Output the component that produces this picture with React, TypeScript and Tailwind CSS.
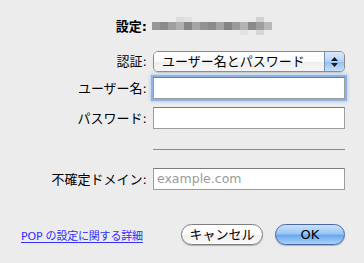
import React from "react";

const jp = "font-['DejaVu_Sans','Noto_Sans_CJK_JP',sans-serif]";

// redacted account name, drawn as a grey mosaic
const mosaicMid = [
  "#979797", "#8a8a8a", "#a0a0a0", "#b0b0b0", "#868686", "#a5a5a5", "#939393", "#8b8b8b",
  "#a2a2a2", "#838383", "#999999", "#b3b3b3", "#8b8b8b", "#9e9e9e", "#b8b8b8",
];
const mosaicTop = [
  "#ececec", "#ececec", "#ececec", "#dcdcdc", "#e0e0e0", "#ececec", "#ececec", "#ececec",
  "#ececec", "#ececec", "#ececec", "#ececec", "#ececec", "#d2d2d2", "#ececec",
];
const mosaicBot = [
  "#ececec", "#ececec", "#ececec", "#ececec", "#ececec", "#ececec", "#ececec", "#ececec",
  "#ececec", "#ececec", "#ececec", "#e2e2e2", "#ececec", "#d6d6d6", "#ececec",
];

function Label({ text, bold }: { text: string; bold?: boolean }) {
  return (
    <div
      className={`w-[147px] shrink-0 text-right text-[13px] leading-none text-black ${
        bold ? "font-bold" : ""
      }`}
    >
      {text}
    </div>
  );
}

function Field({ focused, placeholder }: { focused?: boolean; placeholder?: string }) {
  return (
    <div
      className={`ml-[6px] w-[192px] h-[22px] bg-white border border-[#9d9d9d] border-t-[#7c7c7c] flex items-center pl-[3px] ${
        focused ? "shadow-[0_0_0_2px_#8db2e3,0_0_3px_3px_#b9d0ee]" : ""
      }`}
    >
      {placeholder && (
        <span className="text-[12.5px] text-[#9a9a9a] font-['DejaVu_Sans',sans-serif] leading-none">
          {placeholder}
        </span>
      )}
    </div>
  );
}

export default function App() {
  return (
    <div className={`w-[364px] h-[263px] bg-[#ececec] ${jp} pt-[17px] overflow-hidden`}>
      {/* 設定 */}
      <div className="flex items-center h-[18px]">
        <Label text="設定:" bold />
        <div className="ml-[5px] flex flex-col">
          <div className="flex">
            {mosaicTop.map((c, i) => (
              <div key={i} className="w-[8px] h-[5px]" style={{ background: c }} />
            ))}
          </div>
          <div className="flex">
            {mosaicMid.map((c, i) => (
              <div key={i} className="w-[8px] h-[8px]" style={{ background: c }} />
            ))}
          </div>
          <div className="flex">
            {mosaicBot.map((c, i) => (
              <div key={i} className="w-[8px] h-[5px]" style={{ background: c }} />
            ))}
          </div>
        </div>
      </div>

      {/* 認証 popup */}
      <div className="flex items-center mt-[16px] h-[21px]">
        <Label text="認証:" />
        <div className="ml-[6px] w-[192px] h-[21px] rounded-[5px] border border-[#8a8a8a] flex overflow-hidden shadow-[0_1px_1px_rgba(0,0,0,0.15)]">
          <div className="flex-1 flex items-center pl-[8px] bg-[linear-gradient(#ffffff_0%,#fbfbfb_50%,#eeeeee_51%,#f6f6f6_100%)]">
            <span className="text-[13px] leading-none text-black">ユーザー名とパスワード</span>
          </div>
          <div className="w-[20px] border-l border-[#7a90b8] flex flex-col items-center justify-center gap-[2px] bg-[linear-gradient(#dbe9fb_0%,#b3d2f7_50%,#8fbef3_51%,#c6e0fb_100%)]">
            <svg width="7" height="4" viewBox="0 0 7 4">
              <path d="M3.5 0 L7 4 L0 4 Z" fill="#1a1a1a" />
            </svg>
            <svg width="7" height="4" viewBox="0 0 7 4">
              <path d="M0 0 L7 0 L3.5 4 Z" fill="#1a1a1a" />
            </svg>
          </div>
        </div>
      </div>

      {/* ユーザー名 */}
      <div className="flex items-center mt-[5px]">
        <Label text="ユーザー名:" />
        <Field focused />
      </div>

      {/* パスワード */}
      <div className="flex items-center mt-[8px]">
        <Label text="パスワード:" />
        <Field />
      </div>

      {/* separator */}
      <div className="flex mt-[20px]">
        <div className="w-[153px] shrink-0" />
        <div className="w-[192px] h-px bg-[#8c8c8c]" />
      </div>

      {/* 不確定ドメイン */}
      <div className="flex items-center mt-[18px]">
        <Label text="不確定ドメイン:" />
        <Field placeholder="example.com" />
      </div>

      {/* bottom bar */}
      <div className="flex items-center mt-[34px] pl-[21px] pr-[19px]">
        <a className="text-[11px] leading-none text-[#3030ff] underline underline-offset-[2px] mt-[3px] tracking-[-0.2px]">
          POP の設定に関する詳細
        </a>
        <div className="ml-auto flex items-center gap-[12px]">
          <button className="w-[82px] h-[21px] rounded-full border border-[#7e7e7e] bg-[linear-gradient(#ffffff_0%,#fafafa_50%,#eeeeee_51%,#fbfbfb_100%)] shadow-[0_1px_1px_rgba(0,0,0,0.25)] text-[13px] leading-none text-black flex items-center justify-center">
            キャンセル
          </button>
          <button className="w-[70px] h-[21px] rounded-full border border-[#4c68a3] bg-[linear-gradient(#c9e1fc_0%,#9ac7f6_45%,#6aa9ef_55%,#a9d2fb_100%)] shadow-[0_1px_1px_rgba(0,0,0,0.25)] text-[13px] leading-none text-black flex items-center justify-center">
            OK
          </button>
        </div>
      </div>
    </div>
  );
}
